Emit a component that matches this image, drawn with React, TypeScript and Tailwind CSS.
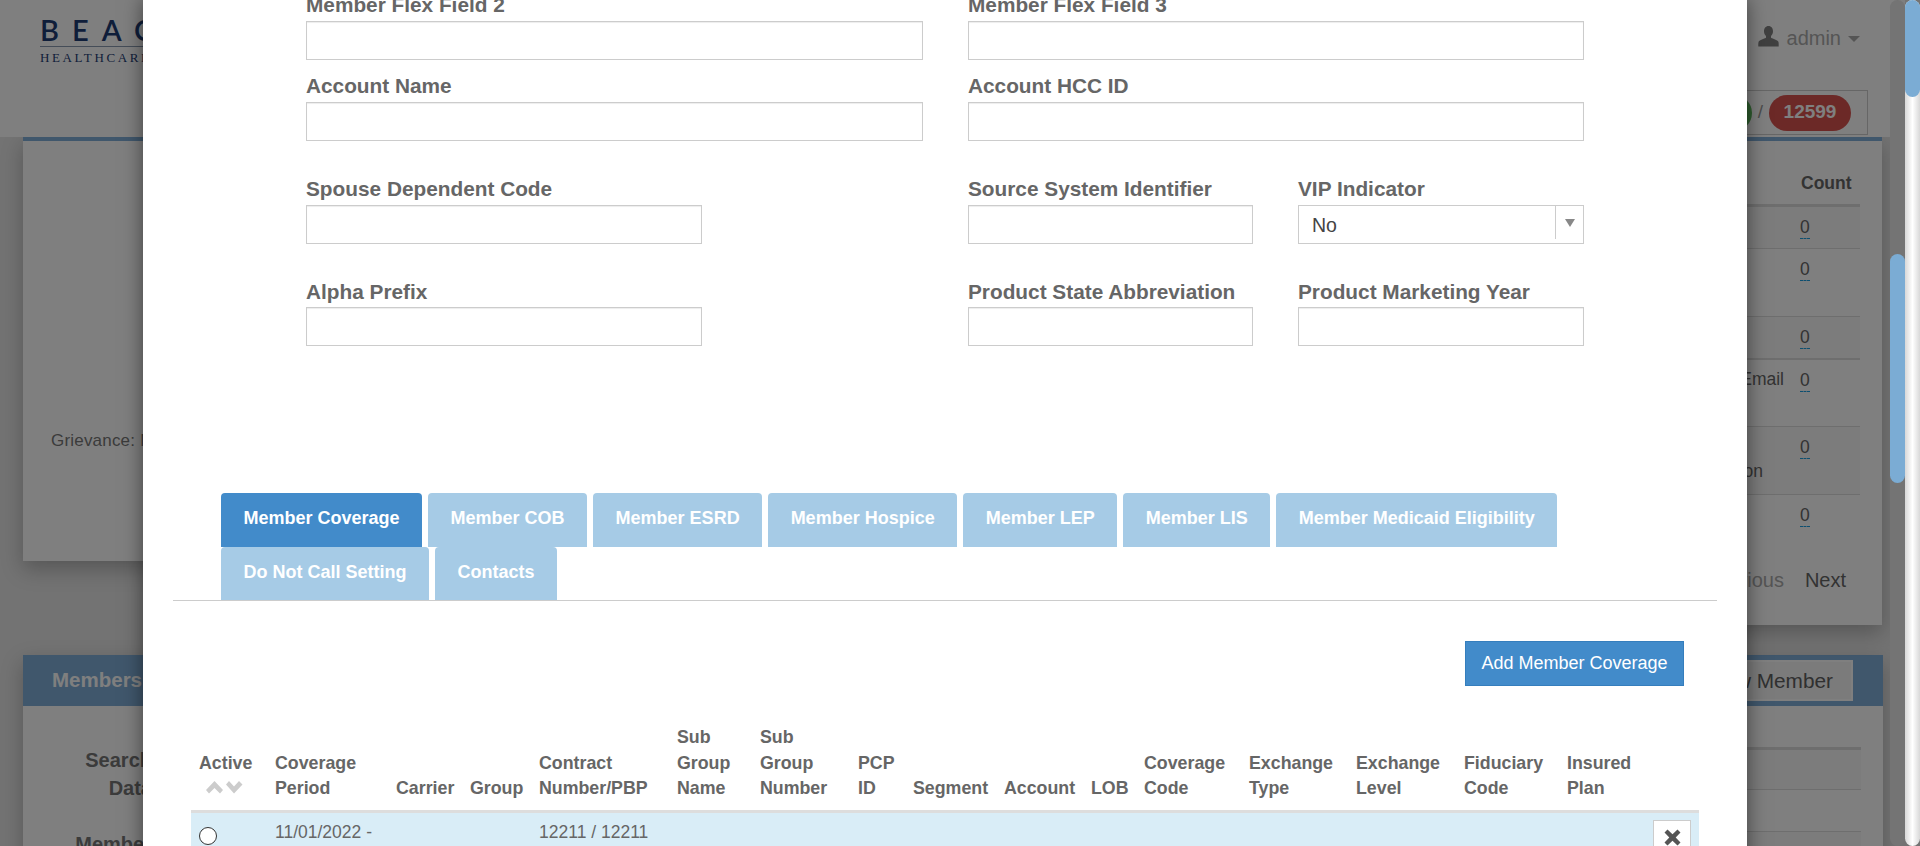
import { ReactNode } from "react";

const tabs = [
  { label: "Member Coverage", active: true },
  { label: "Member COB" },
  { label: "Member ESRD" },
  { label: "Member Hospice" },
  { label: "Member LEP" },
  { label: "Member LIS" },
  { label: "Member Medicaid Eligibility" },
  { label: "Do Not Call Setting" },
  { label: "Contacts" },
];

const columns = [
  { w: "w-[76px]", lines: ["Active"] },
  { w: "w-[121px]", lines: ["Coverage", "Period"] },
  { w: "w-[74px]", lines: ["Carrier"] },
  { w: "w-[69px]", lines: ["Group"] },
  { w: "w-[138px]", lines: ["Contract", "Number/PBP"] },
  { w: "w-[83px]", lines: ["Sub", "Group", "Name"] },
  { w: "w-[98px]", lines: ["Sub", "Group", "Number"] },
  { w: "w-[55px]", lines: ["PCP", "ID"] },
  { w: "w-[91px]", lines: ["Segment"] },
  { w: "w-[87px]", lines: ["Account"] },
  { w: "w-[53px]", lines: ["LOB"] },
  { w: "w-[105px]", lines: ["Coverage", "Code"] },
  { w: "w-[107px]", lines: ["Exchange", "Type"] },
  { w: "w-[108px]", lines: ["Exchange", "Level"] },
  { w: "w-[103px]", lines: ["Fiduciary", "Code"] },
  { w: "w-[86px]", lines: ["Insured", "Plan"] },
  { w: "w-[54px]", lines: [] },
];

const countRows = [
  { cls: "h-[42px] border-b border-[#ddd] bg-[#f9f9f9]", name: null },
  { cls: "h-[68px] border-b border-[#ddd]", name: null },
  { cls: "h-[43px] border-b-2 border-[#ddd] bg-[#f9f9f9]", name: null },
  { cls: "h-[67px] border-b border-[#ddd]", name: <span className="block pr-[16px]">Email</span> },
  {
    cls: "h-[68px] border-b border-[#ddd] bg-[#f9f9f9]",
    name: (
      <>
        <span className="block pr-[80px]">Escalation</span>
        <span className="block pr-[37px]">on</span>
      </>
    ),
  },
  { cls: "h-[55px]", name: null },
];

function Field({
  label,
  className,
  labelClass = "h-[28px] leading-[23px]",
  children,
}: {
  label: string;
  className: string;
  labelClass?: string;
  children?: ReactNode;
}) {
  return (
    <div className={className}>
      <label className={`block whitespace-nowrap text-[20.8px] font-bold text-[#666] ${labelClass}`}>
        {label}
      </label>
      {children ?? (
        <input
          type="text"
          className="block h-[39px] w-full border border-[#ccc] bg-white shadow-[inset_0_1px_1px_rgba(0,0,0,0.075)]"
        />
      )}
    </div>
  );
}

function VipSelect() {
  return (
    <div className="flex h-[39px] w-full items-stretch border border-[#ccc] bg-white pb-[4px]">
      <span className="flex-1 pl-[13px] text-[19.5px] leading-[38px] text-[#444]">No</span>
      <span className="flex w-[28px] items-center justify-center border-l border-[#ccc]">
        <svg width="10" height="8" viewBox="0 0 10 8">
          <polygon points="0,0 10,0 5,8" fill="#888" />
        </svg>
      </span>
    </div>
  );
}

function SortArrows() {
  return (
    <svg width="38" height="13" viewBox="0 0 38 13" className="ml-[7px] block">
      <polygon points="0,9 8.5,0 17,9 14,12.5 8.5,7 3,12.5" fill="#ccc" />
      <polygon points="20,3.5 23,0 28,5.5 33,0 36.5,3.5 28,12.5" fill="#ccc" />
    </svg>
  );
}

function CoverageTable() {
  return (
    <table className="ml-[48px] w-[1508px] table-fixed border-collapse">
      <thead>
        <tr className="border-b-[3px] border-[#ddd]">
          {columns.map((col, i) => (
            <th
              key={i}
              className={`${col.w} px-[8px] pt-[10px] pb-[8px] text-left align-bottom text-[17.8px] leading-[25.5px] font-bold whitespace-nowrap text-[#666]`}
            >
              {col.lines.map((line) => (
                <div key={line}>{line}</div>
              ))}
              {i === 0 && (
                <div className="h-[25.5px] pt-[5px]">
                  <SortArrows />
                </div>
              )}
            </th>
          ))}
        </tr>
      </thead>
      <tbody>
        <tr className="h-[60px] bg-[#d9edf7] align-top">
          <td className="px-[8px] pt-[14px]">
            <span className="block h-[18px] w-[18px] rounded-full border-[1.5px] border-[#333] bg-white" />
          </td>
          <td className="px-[8px] pt-[7px] text-[17.5px] leading-[25px] whitespace-nowrap text-[#666]">
            11/01/2022 -
          </td>
          <td colSpan={2} />
          <td className="px-[8px] pt-[7px] text-[17.5px] leading-[25px] whitespace-nowrap text-[#666]">
            12211 / 12211
          </td>
          <td colSpan={11} />
          <td className="pt-[7px] pl-[8px]">
            <button className="flex h-[40px] w-[38px] items-start justify-center border border-[#ccc] bg-white pt-[8px]">
              <svg width="17" height="17" viewBox="0 0 17 17">
                <polygon
                  points="3.5,0.5 8.5,5.2 13.5,0.5 16.5,3.5 11.7,8.5 16.5,13.5 13.5,16.5 8.5,11.8 3.5,16.5 0.5,13.5 5.3,8.5 0.5,3.5"
                  fill="#555"
                />
              </svg>
            </button>
          </td>
        </tr>
      </tbody>
    </table>
  );
}

function Modal() {
  return (
    <div className="absolute inset-0 overflow-hidden">
      <div className="mt-[-7px] ml-[143px] h-[900px] w-[1604px] bg-white shadow-[0_6px_19px_rgba(0,0,0,0.5)]">
        <div className="pl-[163px]">
          <div className="flex gap-[45px]">
            <Field label="Member Flex Field 2" className="w-[617px]" />
            <Field label="Member Flex Field 3" className="w-[616px]" />
          </div>
          <div className="mt-[14px] flex gap-[45px]">
            <Field label="Account Name" className="w-[617px]" />
            <Field label="Account HCC ID" className="w-[616px]" />
          </div>
          <div className="mt-[36px] flex">
            <Field label="Spouse Dependent Code" className="w-[396px]" />
            <Field label="Source System Identifier" className="ml-[266px] w-[285px]" />
            <Field label="VIP Indicator" className="ml-[45px] w-[286px]">
              <VipSelect />
            </Field>
          </div>
          <div className="mt-[36px] flex">
            <Field label="Alpha Prefix" className="w-[396px]" labelClass="h-[27px] leading-[23px]" />
            <Field
              label="Product State Abbreviation"
              className="ml-[266px] w-[285px]"
              labelClass="h-[27px] leading-[23px]"
            />
            <Field
              label="Product Marketing Year"
              className="ml-[45px] w-[286px]"
              labelClass="h-[27px] leading-[23px]"
            />
          </div>
        </div>

        <div className="mx-[30px] mt-[147px] border-b border-[#ccc]">
          <div className="flex w-[1400px] flex-wrap pl-[48px]">
            {tabs.map((tab) => (
              <div
                key={tab.label}
                className={`mr-[6px] flex h-[53.5px] items-center rounded-t-[4px] px-[22.5px] pb-[2px] text-[18px] font-bold text-white ${
                  tab.active ? "bg-[#428bca]" : "bg-[#a6cbe6]"
                }`}
              >
                {tab.label}
              </div>
            ))}
          </div>
        </div>

        <div className="mt-[40px] flex justify-end pr-[63px]">
          <button className="h-[45px] w-[219px] border border-[#357ebd] bg-[#428bca] text-[18px] text-white">
            Add Member Coverage
          </button>
        </div>

        <div className="mt-[29px]">
          <CoverageTable />
        </div>
      </div>
    </div>
  );
}

function PageHeader() {
  return (
    <header className="relative flex h-[137px] justify-between bg-white pr-[37px]">
      <div className="pt-[12px] pl-[40px]">
        <div className="font-['Lato',sans-serif] text-[29px] leading-[35px] font-semibold tracking-[13px] text-[#1e3c74]">
          BEACON
        </div>
        <div className="mt-[-1px] border-t border-[#8a9ab0] pt-[3px] font-['Liberation_Serif',serif] text-[13px] leading-[15px] tracking-[2.6px] text-[#1e3c74]">
          HEALTHCARE
        </div>
      </div>
      <div className="flex flex-col items-end">
        <div className="mt-[26px] mr-[8px] flex h-[24px] items-center">
          <svg width="21" height="21" viewBox="0 0 21 21" className="mt-[-4px]">
            <path
              d="M10.5 0C7.6 0 6 2.3 6 5.2c0 2 .8 3.7 2 4.8v1.7c-2 1-6.3 2-7.4 4.1C.2 17 .3 19 .3 20.5h20.4c0-1.5.1-3.500-.3-4.700-1.100-2.100-5.400-3.100-7.400-4.100V10c1.200-1.100 2-2.800 2-4.800C15 2.300 13.400 0 10.500 0z"
              fill="#808080"
            />
          </svg>
          <span className="ml-[8px] text-[20px] leading-[24px] text-[#aaa]">admin</span>
          <span className="mt-[2px] ml-[7px] h-0 w-0 border-x-[6px] border-t-[6px] border-x-transparent border-t-[#aaa]" />
        </div>
        <div className="mt-[40px] flex h-[45px] items-center border border-[#ccc] pr-[16px] pl-[10px]">
          <span className="flex h-[36px] items-center rounded-full bg-[#5cb85c] px-[14px] text-[19px] font-bold text-white">
            1204
          </span>
          <span className="mx-[6px] text-[19px] text-[#999]">/</span>
          <span className="flex h-[36px] w-[82px] items-center justify-center rounded-full bg-[#d9534f] text-[19px] font-bold text-white">
            12599
          </span>
        </div>
      </div>
    </header>
  );
}

function CountPanel() {
  return (
    <section className="h-[488px] flex-1 border-t-4 border-[#80aed8] bg-white pr-[22px] shadow-[0_8px_20px_rgba(0,0,0,0.25)]">
      <div className="flex h-[66px] items-end justify-end border-b-[3px] border-[#ddd] pb-[8px]">
        <span className="w-[59px] text-[17.5px] leading-[25px] font-bold text-[#666]">Count</span>
      </div>
      {countRows.map((row, i) => (
        <div key={i} className={`flex ${row.cls}`}>
          <div className="flex-1 pt-[7px] text-right text-[17.5px] leading-[25px] text-[#666]">
            {row.name}
          </div>
          <div className="w-[60px] pt-[10px] text-[17.5px] leading-[21px] text-[#666]">
            <span className="inline-block border-b border-dashed border-[#1a9fe0]">0</span>
          </div>
        </div>
      ))}
      <div className="flex justify-end pt-[18px] pr-[14px] text-[20px] leading-[25px]">
        <span className="text-[#aaa]">Previous</span>
        <span className="ml-[21px] text-[#666]">Next</span>
      </div>
    </section>
  );
}

function MemberPanel() {
  return (
    <section className="mt-[30px] mr-[-1px] h-[300px] bg-white shadow-[0_8px_20px_rgba(0,0,0,0.25)]">
      <div className="flex h-[51px] items-center justify-between bg-[#80aed8] pr-[30px] pl-[29px]">
        <span className="text-[20.5px] font-bold text-white">Members</span>
        <button className="h-[41px] border-2 border-white bg-[#f6f6f6] px-[18px] text-[20.8px] text-[#606060]">
          View Member
        </button>
      </div>
      <div className="flex pr-[22px]">
        <div className="w-[129px] pt-[40px] text-right text-[20px] leading-[28px] font-bold text-[#777]">
          <div>Search</div>
          <div>Data</div>
          <div className="mt-[28px]">Member</div>
        </div>
        <div className="ml-[500px] flex-1 pt-[41px]">
          <div className="h-[43px] border-y-[3px] border-b border-[#ddd] bg-[#f9f9f9]" />
          <div className="h-[42px] border-b border-[#ddd]" />
          <div className="h-[42px] border-b border-[#ddd] bg-[#f9f9f9]" />
        </div>
      </div>
    </section>
  );
}

function Scrollbars() {
  return (
    <>
      <div className="absolute top-0 right-[15px] h-full w-[15px] rounded-full bg-[#747474]">
        <div className="mt-[254px] h-[229px] rounded-full bg-[#7bacd4]" />
      </div>
      <div className="absolute top-0 right-0 h-full w-[15px] rounded-full bg-gradient-to-r from-[#d8d8d8] via-white to-[#d8d8d8]">
        <div className="h-[97px] rounded-full bg-[#7bacd4]" />
      </div>
    </>
  );
}

export default function App() {
  return (
    <div className="relative h-[846px] w-[1920px] overflow-hidden bg-[#e6e6e6] font-['Liberation_Sans',Arial,sans-serif]">
      <div className="w-[1905px]">
        <PageHeader />
        <main className="pr-[23px] pl-[23px]">
          <div className="flex h-[488px] items-start gap-[30px]">
            <section className="h-[424px] w-[900px] border-t-4 border-[#80aed8] bg-white pt-[287px] pl-[28px] shadow-[0_8px_20px_rgba(0,0,0,0.25)]">
              <span className="text-[17px] leading-[25px] tracking-[0.2px] text-[#777]">Grievance: Member</span>
            </section>
            <CountPanel />
          </div>
          <MemberPanel />
        </main>
      </div>
      <div className="absolute inset-0 bg-black/50" />
      <Modal />
      <Scrollbars />
    </div>
  );
}
